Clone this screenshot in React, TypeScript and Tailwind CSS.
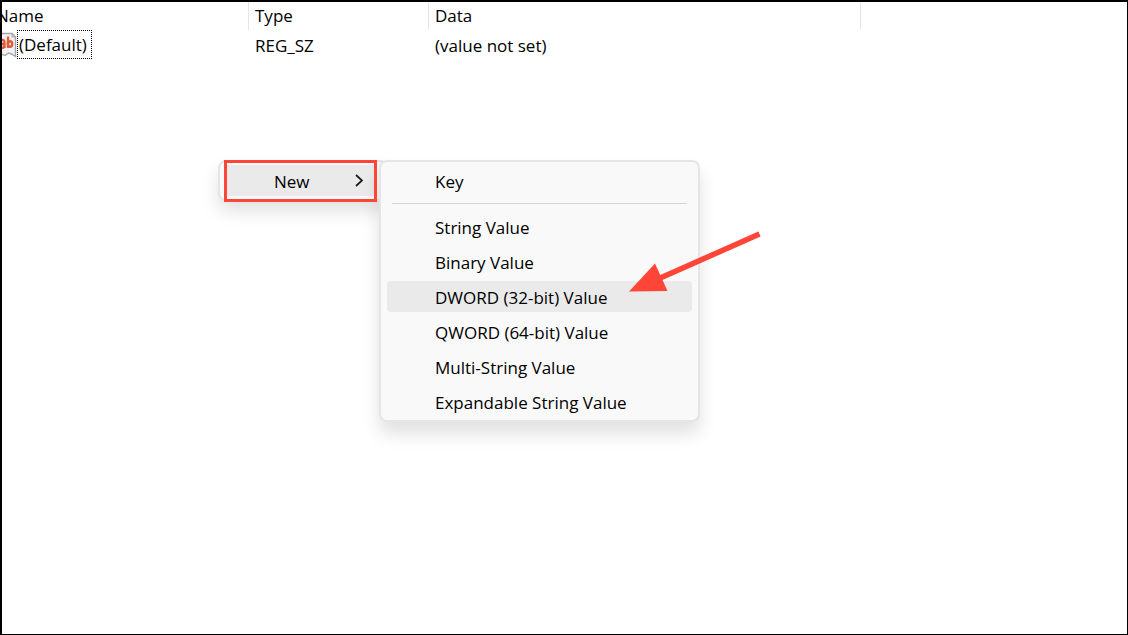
import React from 'react';
import clsx from 'clsx';

const columns = ['Name', 'Type', 'Data'];

const valueTypes = [
  'String Value',
  'Binary Value',
  'DWORD (32-bit) Value',
  'QWORD (64-bit) Value',
  'Multi-String Value',
  'Expandable String Value',
];

const panelClass = 'absolute rounded-lg border-2 border-[#e5e5e5] bg-[#f9f9f9] px-1.5 pt-[3px] pb-[3px]';

// String value icon, the left part is cut off by the pane edge
const StringIcon: React.FC = () => (
  <svg className="h-7 w-4 shrink-0" viewBox="0 0 16 28" aria-hidden="true">
    <path d="M-1 2.500H10L13.500 6V25.500L9.500 23L6.500 22L3 24.500L-1 23Z" fill="#f1f1f3" stroke="#a6a6aa" strokeWidth="1.4" />
    <path d="M10 2.500V6H13.500Z" fill="#d4d4d4" stroke="#a6a6a6" />
    <g fill="none" stroke="#e05a3a" strokeWidth="2.4">
      <path d="M-2 9.500C1.500 8.500 2.500 9 2.500 11.500V17M2.500 13H0M2.500 15.500C1.500 17 0 17 -1 16.500" />
      <path d="M6 5.500V17" />
      <ellipse cx="8" cy="13" rx="2.200" ry="2.800" />
    </g>
  </svg>
);

interface MenuItemProps {
  label: string;
  active?: boolean;
}

const MenuItem: React.FC<MenuItemProps> = ({ label, active }) => (
  <button
    type="button"
    role="menuitem"
    className={clsx('block h-[31px] w-full rounded-sm pt-0.5 pl-12 text-left', active && 'bg-[#eaeaea]')}
  >
    {label}
  </button>
);

const App: React.FC = () => {
  return (
    <main className="relative min-h-screen overflow-hidden border-t-2 border-r border-b border-l-2 border-black bg-white font-['Open_Sans','Noto_Sans',sans-serif] text-[17px] leading-7 text-black">
      <table className="w-full table-fixed border-separate border-spacing-0 text-left">
        <colgroup>
          <col className="w-[247px]" />
          <col className="w-[180px]" />
          <col className="w-[432px]" />
          <col />
        </colgroup>
        <thead>
          <tr className="h-7">
            {columns.map((name, i) => (
              <th key={name} className={clsx('border-r border-[#e5e5e5] p-0 font-normal', i > 0 && 'pl-1.5')}>
                <span className={clsx(i === 0 && '-ml-1.5')}>{name}</span>
              </th>
            ))}
            <th className="p-0"></th>
          </tr>
        </thead>
        <tbody>
          <tr className="h-8">
            <td className="p-0 align-top">
              <div className="flex items-center">
                <StringIcon />
                <span className="-ml-px border border-dotted border-black pr-1 pl-px leading-[27px]">(Default)</span>
              </div>
            </td>
            <td className="p-0 pl-1.5">REG_SZ</td>
            <td className="p-0 pl-1.5">(value not set)</td>
            <td className="p-0"></td>
          </tr>
        </tbody>
      </table>

      {/* Context menu */}
      <div role="menu" className={clsx(panelClass, 'top-[158px] left-[216px] w-[170px] shadow-[0_10px_18px_rgba(0,0,0,0.12)]')}>
        <button type="button" role="menuitem" className="flex h-[31px] w-[150px] items-center justify-between bg-[#eaeaea] pr-3 pl-12">
          <span className="pt-0.5">New</span>
          <svg className="h-3.5 w-2.5" viewBox="0 0 10 14" fill="none" stroke="#1a1a1a" strokeWidth="1.7" aria-hidden="true">
            <path d="M2 1L8 6.500L2 12" />
          </svg>
        </button>
      </div>

      {/* New submenu */}
      <div role="menu" className={clsx(panelClass, 'top-[158px] left-[377px] w-[321px] shadow-[0_12px_18px_rgba(0,0,0,0.12)]')}>
        <MenuItem label="Key" />
        <hr className="mx-[5px] my-[7px] border-[#d7d7d7]" />
        <div className="flex flex-col gap-1">
          {valueTypes.map((label) => (
            <MenuItem key={label} label={label} active={label.startsWith('DWORD')} />
          ))}
        </div>
      </div>

      {/* Callouts */}
      <div className="pointer-events-none absolute top-[158px] left-[222px] h-[42px] w-[153px] border-3 border-[#ff4438]"></div>
      <svg className="pointer-events-none absolute top-[228px] left-[626px] h-16 w-34" viewBox="0 0 136 64" aria-hidden="true">
        <path d="M131.500 4L30 49" stroke="#ff4438" strokeWidth="5.500" />
        <path d="M1 61.500L27 33.500L39.500 61Z" fill="#ff4438" />
      </svg>
    </main>
  );
};

export default App;
